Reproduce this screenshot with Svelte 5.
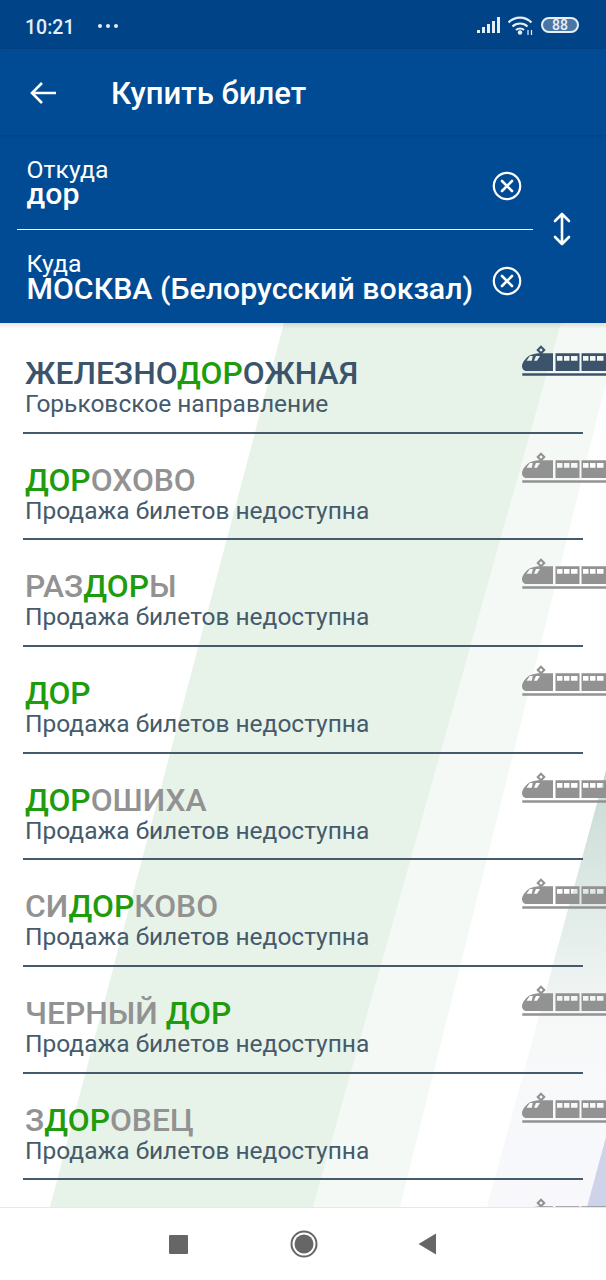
<script>
  const query = "ДОР";
  const stations = [
    { name: "ЖЕЛЕЗНОДОРОЖНАЯ", sub: "Горьковское направление", active: true },
    { name: "ДОРОХОВО" },
    { name: "РАЗДОРЫ" },
    { name: "ДОР" },
    { name: "ДОРОШИХА" },
    { name: "СИДОРКОВО" },
    { name: "ЧЕРНЫЙ ДОР" },
    { name: "ЗДОРОВЕЦ" },
  ];

  function parts(name) {
    const i = name.indexOf(query);
    return [name.slice(0, i), query, name.slice(i + query.length)];
  }
</script>

{#snippet clearIcon()}
  <svg class="clear" viewBox="0 0 30 30" width="30" height="30">
    <circle cx="15" cy="15" r="13.2" fill="none" stroke="#fff" stroke-width="2.2" />
    <path d="M10 10l10 10M20 10L10 20" stroke="#fff" stroke-width="2.6" stroke-linecap="round" />
  </svg>
{/snippet}

{#snippet train()}
  <svg class="train" viewBox="0 0 84 32" width="84" height="32">
    <path fill-rule="evenodd" d="M19 0.300l4.700 4.700-4.700 4.700-4.700-4.700zM19 3.200l-1.800 1.800 1.800 1.800 1.800-1.800z" />
    <path fill-rule="evenodd" d="M31 8.300V26H4.500C1.500 26 0 23.500 0 21C0 18 3.500 13 7.500 10.500C11 8.800 15 8.300 19 8.300zM7.800 11L4.500 15.700H9.800L10.800 11zM14 11L12 15.700H15L18 11z" />
    <path fill-rule="evenodd" d="M33.500 8.300H57.500V26H33.500zM35 11v4.700h5.500V11zM42 11v4.700h5.500V11zM49 11v4.700h6.500V11z" />
    <path fill-rule="evenodd" d="M59.500 8.300H84V26H59.500zM61 11v4.700h5.500V11zM68 11v4.700h5.500V11zM75 11v4.700h6.500V11z" />
    <path d="M0.300 28.300h84v2.400h-84z" />
  </svg>
{/snippet}

<div class="screen">
  <div class="status">
    <span class="time">10:21</span>
    <span class="dots"><i></i><i></i><i></i></span>
    <span class="spacer"></span>
    <svg viewBox="0 0 23 16" width="23" height="16" fill="#e6eef7">
      <path d="M0 13h3v3H0zM5 10h3v6H5zM10 7h3v9h-3zM15 4h3v12h-3zM20 0h3v16h-3z" />
    </svg>
    <svg class="wifi" viewBox="0 0 25 19" width="25" height="19" fill="none" stroke="#e6eef7" stroke-width="2.200">
      <path d="M0.500 6.500c6.500-6.500 16.500-6.500 23 0M4.500 10.500c4-4 11-4 15 0M8 14c2-2 6-2 8 0" />
      <circle cx="12" cy="16.500" r="2.200" fill="#e6eef7" stroke="none" />
      <path d="M20 14v5M23.500 14v5" stroke-width="1.200" />
    </svg>
    <span class="battery">88</span>
  </div>

  <header class="appbar">
    <svg viewBox="0 0 28 24" width="28" height="24" fill="none" stroke="#fff" stroke-width="2.600">
      <path d="M27 12H3M13 2L3 12l10 10" />
    </svg>
    <h1>Купить билет</h1>
  </header>

  <section class="route">
    <div class="fields">
      <div class="field first">
        <div class="text">
          <div class="label">Откуда</div>
          <div class="value">дор</div>
        </div>
        {@render clearIcon()}
      </div>
      <div class="field">
        <div class="text">
          <div class="label">Куда</div>
          <div class="value">МОСКВА (Белорусский вокзал)</div>
        </div>
        {@render clearIcon()}
      </div>
    </div>
    <svg class="swap" viewBox="0 0 18 34" width="18" height="34" fill="none" stroke="#fff" stroke-width="2.600" stroke-linecap="round" stroke-linejoin="round">
      <path d="M9 2v30M2 9l7-7 7 7M2 25l7 7 7-7" />
    </svg>
  </section>

  <main class="results">
    <svg class="bg" viewBox="0 0 606 884" width="606" height="884">
      <defs>
        <linearGradient id="teal" x1="0" y1="447" x2="0" y2="884" gradientUnits="userSpaceOnUse">
          <stop offset="0" stop-color="#c6dad3" />
          <stop offset="0.3" stop-color="#dfeae6" />
          <stop offset="0.6" stop-color="#f7f9f9" />
          <stop offset="1" stop-color="#f8f8fc" />
        </linearGradient>
      </defs>
      <polygon points="540,0 621,0 400,884 300,884" fill="#f4f9f5" />
      <polygon points="284,0 561,0 313,884 50,884" fill="#e7f2e9" />
      <polygon points="606,447 606,884 487,884" fill="url(#teal)" />
      <polygon points="606,814 606,884 587,884" fill="#cdd4ea" />
    </svg>

    <ul>
      {#each stations as s}
        {@const [before, hit, after] = parts(s.name)}
        <li class:active={s.active}>
          <div class="info">
            <div class="name">{before}<b>{hit}</b>{after}</div>
            <div class="sub">{s.sub ?? "Продажа билетов недоступна"}</div>
          </div>
          {@render train()}
        </li>
      {/each}
      <li class="partial">{@render train()}</li>
    </ul>
  </main>

  <nav class="navbar">
    <span class="square"></span>
    <svg viewBox="0 0 28 28" width="28" height="28">
      <circle cx="14" cy="14" r="12.500" fill="none" stroke="#666" stroke-width="2" />
      <circle cx="14" cy="14" r="9.500" fill="#666" />
    </svg>
    <svg class="back" viewBox="0 0 18 22" width="18" height="22"><path d="M18 0.500v21L0.500 11z" fill="#666" /></svg>
  </nav>
</div>

<style>
  :global(body) {
    background: #fff;
  }

  .screen {
    width: 606px;
    height: 1280px;
    display: flex;
    flex-direction: column;
    overflow: hidden;
    font-family: Roboto, sans-serif;
  }

  .status {
    height: 49px;
    flex: none;
    background: #004386;
    color: #e6eef7;
    display: flex;
    align-items: center;
    padding: 5px 27px 0 25px;
    box-sizing: border-box;
  }

  .time {
    font-size: 19.500px;
    font-weight: 500;
  }

  .dots {
    display: flex;
    gap: 4px;
    margin-left: 24px;
    margin-bottom: 3px;
  }

  .dots i {
    width: 4px;
    height: 4px;
    border-radius: 50%;
    background: #e6eef7;
  }

  .spacer {
    flex: 1;
  }

  .status svg {
    margin-bottom: 4px;
  }

  .wifi {
    margin-left: 8px;
  }

  .battery {
    margin: 0 0 4px 8px;
    width: 34px;
    height: 12px;
    border: 2px solid #e6eef7;
    border-radius: 8px;
    background: #4a76a6;
    font-size: 14px;
    font-weight: 500;
    line-height: 12px;
    text-align: center;
  }

  .appbar {
    height: 86px;
    flex: none;
    background: #004b93;
    display: flex;
    align-items: center;
    padding: 2px 0 0 29px;
    box-sizing: border-box;
    box-shadow: 0 1px 3px rgba(0, 0, 0, 0.12);
    position: relative;
  }

  h1 {
    margin: 0 0 0 54px;
    color: #fff;
    font-size: 31.100px;
    font-weight: 500;
  }

  .route {
    height: 188px;
    flex: none;
    background: #004b93;
    display: flex;
    align-items: flex-start;
    padding: 0 0 0 17px;
    box-sizing: border-box;
  }

  .fields {
    width: 516px;
  }

  .field {
    height: 93px;
    box-sizing: border-box;
    display: flex;
    align-items: flex-start;
    justify-content: space-between;
    padding: 21px 11px 0 9.500px;
    color: #fff;
  }

  .field.first {
    height: 95px;
    padding-top: 22px;
    border-bottom: 1.500px solid #fff;
  }

  .label {
    font-size: 24.800px;
    line-height: 25px;
  }

  .value {
    font-size: 30.300px;
    font-weight: 500;
    line-height: 25px;
  }

  .first .value {
    line-height: 24px;
  }

  .clear {
    margin-top: 15px;
  }

  .first .clear {
    margin-top: 14px;
  }

  .swap {
    margin: 77px 0 0 20px;
  }

  .results {
    flex: 1;
    min-height: 0;
    position: relative;
    overflow: hidden;
  }

  .results::after {
    content: "";
    position: absolute;
    left: 0;
    right: 0;
    top: 0;
    height: 6px;
    background: linear-gradient(rgba(0, 0, 0, 0.1), rgba(0, 0, 0, 0));
  }

  .bg {
    position: absolute;
    left: 0;
    top: 0;
  }

  ul {
    list-style: none;
    margin: 0;
    padding: 4px 0 0;
    position: relative;
  }

  li {
    height: 106.667px;
    margin: 0 23px;
    box-sizing: border-box;
    border-bottom: 2px solid #455a6b;
    position: relative;
    color: #929292;
  }

  li.active {
    color: #3b536b;
  }

  li.partial {
    border: none;
  }

  .info {
    padding: 29px 0 0 2px;
  }

  .name {
    font-size: 31.800px;
    font-weight: 500;
    line-height: 34px;
  }

  .name b {
    font-weight: 500;
    color: #1e9c0c;
  }

  .sub {
    font-size: 24.500px;
    line-height: 28px;
    color: #455a6b;
  }

  .train {
    position: absolute;
    left: 499px;
    top: 18px;
    fill: currentColor;
  }

  .navbar {
    height: 73px;
    flex: none;
    background: #fff;
    border-top: 1px solid #e8e8e8;
    box-sizing: border-box;
    display: flex;
    align-items: center;
    justify-content: center;
    gap: 102px;
    padding-right: 2px;
  }

  .square {
    width: 19px;
    height: 19px;
    background: #666;
    border-radius: 1px;
  }

  .back {
    margin-left: -2px;
  }
</style>
